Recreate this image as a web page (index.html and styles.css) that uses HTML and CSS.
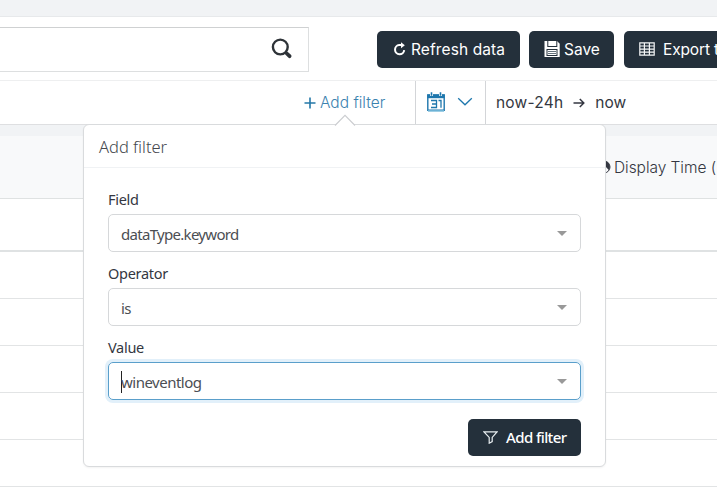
FILE: index.html
```html
<!DOCTYPE html>
<html lang="en">
<head>
<meta charset="utf-8">
<title>Events</title>
<link rel="stylesheet" href="styles.css">
</head>
<body>
<header class="toolbar">
  <div class="search">
    <svg width="22" height="22" viewBox="0 0 22 22" fill="none" stroke="#2e3338"><circle cx="9.3" cy="9" r="7.4" stroke-width="2.4"/><path d="M14.2 14.2l1.5 1.5" stroke-width="2.4"/><path d="M15.8 15.5l2.8 2.7" stroke-width="3.8" stroke-linecap="round"/></svg>
  </div>
  <button class="btn refresh"><svg width="13" height="14" viewBox="0 0 13 14" fill="none" stroke="#fff" stroke-width="2"><path d="M8.6 3.1H6.2a4.6 4.6 0 1 0 5 5.1"/><path d="M8 .2l3.8 3L8 6.2z" fill="#fff" stroke="none"/></svg><span>Refresh data</span></button>
  <button class="btn save"><svg width="16" height="16" viewBox="0 0 16 16"><path d="M.5 0H13l2.7 2.7V16H.5z" fill="#fff"/><path d="M3.3 0h1v5h8V0h1v6h-10zM2.5 8h11v7h-11z" fill="#24303b"/><path d="M9 1h2v3H9zM3.5 9h9v5h-9z" fill="#fff"/><path d="M4 10.5h8M4 12.5h8" stroke="#66737d"/></svg><span>Save</span></button>
  <button class="btn export"><svg width="16" height="14" viewBox="0 0 16 14" fill="none" stroke="#f4f6f7" stroke-width="1.2"><path d="M.8.8h14.4v12.4H.8zM.8 4h14.4M.8 7.1h14.4M.8 10.2h14.4M5.4.8v12.4M10.4.8v12.4"/></svg><span>Export t</span></button>
</header>
<nav class="filters">
  <a class="add-link"><svg width="12" height="12" viewBox="0 0 12 12" stroke="#2478a8" stroke-width="1.6"><path d="M6 .5v11M.5 6h11"/></svg><span>Add filter</span></a>
  <div class="quick">
    <svg width="18" height="20" viewBox="0 0 18 20" fill="none"><path d="M.8 3h16.4v15.2H.8z" stroke="#1e77ad" stroke-width="1.4"/><path d="M.3 2.5h17.4v3.7H.3z" fill="#1e77ad"/><path d="M4.5 0v4M13.5 0v4" stroke="#fff" stroke-width="3"/><path d="M4.5.3v3.5M13.5.3v3.5" stroke="#1e77ad" stroke-width="1.6"/><path d="M1 18.9h16" stroke="#75b9da" stroke-width="1.6"/><path d="M4 8.5h5.5v7H4M5 12h4.5M11.5 8.5H14v7.2" stroke="#1e77ad" stroke-width="1.3"/></svg>
    <svg width="16" height="10" viewBox="0 0 16 10" fill="none" stroke="#1e77ad" stroke-width="1.3"><path d="M1.2 1.2L8 7.8l6.8-6.6"/></svg>
  </div>
  <div class="range"><span class="from">now-24h</span><svg width="12" height="10" viewBox="0 0 12 10" fill="none" stroke="#343741" stroke-width="1.5"><path d="M.5 5h10.2M6.8 1l4 4-4 4"/></svg><span class="to">now</span></div>
</nav>
<main class="table">
  <div class="thead"><svg width="14" height="14" viewBox="0 0 14 14" fill="none"><circle cx="7" cy="7" r="6" stroke="#343741"/><path d="M7 1a6 6 0 0 1 5 9.3L8 6z" fill="#343741"/></svg><span>Display Time (</span></div>
  <div class="row first"></div>
  <div class="row"></div>
  <div class="row"></div>
  <div class="row"></div>
  <div class="row"></div>
  <div class="row"></div>
</main>
<section class="popover">
  <svg class="arrow" width="22" height="12" viewBox="0 0 22 12"><path d="M1 11.5L11 1.3l10 10.2" fill="#fff" stroke="#cbcdd0" stroke-width="1.1"/></svg>
  <h2><span>Add filter</span></h2>
  <div class="form">
    <label>Field</label>
    <div class="select"><span class="field">dataType.keyword</span><i></i></div>
    <label>Operator</label>
    <div class="select"><span>is</span><i></i></div>
    <label>Value</label>
    <div class="select focus"><b></b><span>wineventlog</span><i></i></div>
    <button class="btn submit"><svg width="15" height="13" viewBox="0 0 15 13" fill="none" stroke="#e8eef1" stroke-width="1.2"><path d="M1 .9h13L9.2 6.4v4.2l-3 1.6V6.4z"/></svg><span>Add filter</span></button>
  </div>
</section>
</body>
</html>
```
FILE: styles.css
```css
* { box-sizing: border-box; }
body { margin: 0; height: 504px; overflow: hidden; position: relative; padding-top: 16px; background: #f1f3f5; font-family: Inter, sans-serif; color: #343741; }
svg { display: block; flex: none; }
span { white-space: nowrap; }
.toolbar { height: 65px; display: flex; background: #fff; border-top: 1px solid #e7e9eb; border-bottom: 1px solid #eeeff0; }
.search { width: 309px; height: 45px; margin-top: 10px; border: 1px solid #dddfe0; border-top-color: #cfd1d2; border-left: 0; display: flex; align-items: center; justify-content: flex-end; padding: 0 15px 1px 0; flex: none; }
.btn { border: 0; border-radius: 5px; background: #24303b; color: #fff; height: 37px; padding: 0; display: flex; align-items: center; font: 15.5px Inter, sans-serif; flex: none; }
.toolbar .btn { margin-top: 14px; padding-bottom: 1px; }
.toolbar .refresh { width: 143px; margin-left: 68px; padding-left: 16px; gap: 5px; }
.refresh span { letter-spacing: .1px; }
.toolbar .save { width: 85px; margin-left: 9px; padding-left: 15px; gap: 4px; }
.toolbar .export { flex: 1; border-radius: 5px 0 0 5px; margin-left: 10px; padding-left: 15px; gap: 8px; min-width: 0; }
.export span { letter-spacing: -.15px; }
.filters { height: 44px; display: flex; background: #fff; border-bottom: 1px solid #dedfe1; }
.add-link { width: 415px; padding-left: 304px; display: flex; align-items: center; gap: 4px; color: #3b82af; font-size: 15.5px; font-weight: 300; flex: none; }
.quick { width: 71px; border: 1px solid #d3d5d8; border-width: 0 1px; display: flex; align-items: center; gap: 12px; padding: 0 0 2px 11px; flex: none; }
.range { display: flex; align-items: center; padding-left: 10px; font-size: 15.5px; gap: 10px; }
.from { letter-spacing: .2px; }
.table { margin-top: 11px; background: #fff; }
.thead { height: 63px; background: #f8f9fa; border-bottom: 1px solid #dfe2e2; display: flex; align-items: center; gap: 3px; padding-left: 597px; font-size: 15.5px; font-weight: 300; }
.thead span { letter-spacing: -.05px; }
.row { height: 47px; border-bottom: 1px solid #e2e4e5; }
.row.first { height: 53px; border-bottom: 2px solid #dfe2e3; }
.table::after { content: ""; display: block; height: 30px; }
.popover { position: absolute; left: 83px; top: 124px; width: 523px; height: 343px; background: #fff; border: 1px solid #d9dbdd; border-radius: 6px; font-family: "Noto Sans", sans-serif; box-shadow: 0 1px 2px rgba(0,0,0,.05); }
.arrow { position: absolute; left: 250px; top: -11px; }
.popover h2 { margin: 0; height: 43px; border-bottom: 1px solid #f0f2f4; padding-left: 15px; font-size: 16.5px; font-weight: 300; line-height: 44px; color: #45484e; }
.form { padding: 21px 24px 0; display: flex; flex-direction: column; }
label { height: 25px; line-height: 20px; font-size: 14.5px; letter-spacing: -.3px; }
.select { height: 38px; border: 1px solid #d6d8da; border-radius: 5px; margin-bottom: 11px; padding: 2px 13px 0 12px; display: flex; align-items: center; font-size: 15px; letter-spacing: -.5px; color: #4b4e53; flex: none; }
.field { letter-spacing: -.7px; }
.select i { margin: 0 0 2px auto; border: 5.5px solid transparent; border-top-color: #999; border-bottom: 0; }
.select.focus { border-color: #5a9fcb; box-shadow: 0 0 0 3px #e2f0fa; }
.select b { width: 1px; height: 22px; margin-right: -1px; background: #222; }
.submit { width: 113px; align-self: flex-end; margin-top: 8px; padding: 0 0 1px 15px; gap: 8px; font: 500 15px "Noto Sans", sans-serif; letter-spacing: -.6px; }
```
